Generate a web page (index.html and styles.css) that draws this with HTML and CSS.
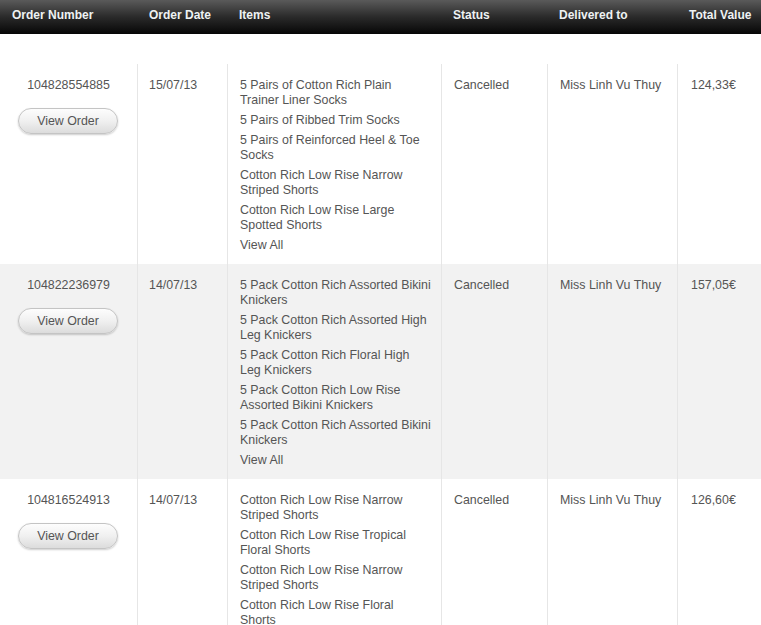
FILE: index.html
```html
<!DOCTYPE html>
<html>
<head>
<meta charset="utf-8">
<link rel="stylesheet" href="styles.css">
</head>
<body>
<table class="orders">
  <colgroup>
    <col class="c-num"><col class="c-date"><col class="c-items"><col class="c-status"><col class="c-deliv"><col class="c-total">
  </colgroup>
  <thead>
    <tr class="head">
      <th>Order Number</th>
      <th>Order Date</th>
      <th>Items</th>
      <th>Status</th>
      <th>Delivered to</th>
      <th>Total Value</th>
    </tr>
    <tr class="spacer"><td colspan="6"></td></tr>
  </thead>
  <tbody>
    <tr class="row">
      <td class="num">104828554885<a class="btn">View Order</a></td>
      <td class="date">15/07/13</td>
      <td class="itemcell">
        <ul class="items">
          <li>5 Pairs of Cotton Rich Plain Trainer Liner Socks</li>
          <li>5 Pairs of Ribbed Trim Socks</li>
          <li>5 Pairs of Reinforced Heel &amp; Toe Socks</li>
          <li>Cotton Rich Low Rise Narrow Striped Shorts</li>
          <li>Cotton Rich Low Rise Large Spotted Shorts</li>
          <li>View All</li>
        </ul>
      </td>
      <td>Cancelled</td>
      <td>Miss Linh Vu Thuy</td>
      <td class="total">124,33€</td>
    </tr>
    <tr class="row alt">
      <td class="num">104822236979<a class="btn">View Order</a></td>
      <td class="date">14/07/13</td>
      <td class="itemcell">
        <ul class="items">
          <li>5 Pack Cotton Rich Assorted Bikini Knickers</li>
          <li>5 Pack Cotton Rich Assorted High Leg Knickers</li>
          <li>5 Pack Cotton Rich Floral High Leg Knickers</li>
          <li>5 Pack Cotton Rich Low Rise Assorted Bikini Knickers</li>
          <li>5 Pack Cotton Rich Assorted Bikini Knickers</li>
          <li>View All</li>
        </ul>
      </td>
      <td>Cancelled</td>
      <td>Miss Linh Vu Thuy</td>
      <td class="total">157,05€</td>
    </tr>
    <tr class="row">
      <td class="num">104816524913<a class="btn">View Order</a></td>
      <td class="date">14/07/13</td>
      <td class="itemcell">
        <ul class="items">
          <li>Cotton Rich Low Rise Narrow Striped Shorts</li>
          <li>Cotton Rich Low Rise Tropical Floral Shorts</li>
          <li>Cotton Rich Low Rise Narrow Striped Shorts</li>
          <li>Cotton Rich Low Rise Floral Shorts</li>
          <li>Cotton Rich Low Rise Large Spotted Shorts</li>
          <li>View All</li>
        </ul>
      </td>
      <td>Cancelled</td>
      <td>Miss Linh Vu Thuy</td>
      <td class="total">126,60€</td>
    </tr>
  </tbody>
</table>
</body>
</html>
```

FILE: styles.css
```css
html, body {
  margin: 0;
  padding: 0;
  background: #fff;
}
body {
  font-family: "Liberation Sans", Arial, sans-serif;
  font-size: 12.4px;
  line-height: 15px;
  color: #555;
  overflow: hidden;
}
.orders {
  width: 761px;
  table-layout: fixed;
  border-collapse: separate;
  border-spacing: 0;
}
.c-num { width: 138px; }
.c-date { width: 90px; }
.c-items { width: 214px; }
.c-status { width: 106px; }
.c-deliv { width: 130px; }
.c-total { width: 83px; }

.head {
  background: linear-gradient(to bottom, #5a5a5a 0%, #2a2a2a 50%, #060606 100%);
}
.head th {
  color: #eef2f3;
  font-size: 12px;
  font-weight: bold;
  text-align: left;
  vertical-align: top;
  padding: 8px 0 0 11px;
  height: 26px;
  white-space: nowrap;
}
.head th:first-child { padding-left: 12px; }
.spacer td {
  height: 30px;
  padding: 0;
}
.row td {
  vertical-align: top;
  padding: 14px 12px 11px 12px;
  border-right: 1px solid #e6e6e6;
}
.row td:last-child {
  border-right: none;
  padding-left: 13px;
}
.row td.date { padding-left: 11px; }
.row td.itemcell { padding-right: 10px; }
.row.alt { background: #f2f2f2; }
.row td.num {
  text-align: center;
  padding-left: 0;
  padding-right: 0;
}
.btn {
  display: block;
  width: 98px;
  height: 24px;
  line-height: 24px;
  margin: 15px 0 0 18px;
  border: 1px solid #c4c4c4;
  border-radius: 13px;
  background: linear-gradient(to bottom, #fdfdfd 0%, #f0f0f0 50%, #dcdcdc 100%);
  box-shadow: 0 1px 2px rgba(0,0,0,0.2);
  color: #555;
  text-align: center;
}
.items {
  list-style: none;
  margin: 0;
  padding: 0;
}
.items li + li { margin-top: 5px; }
```
